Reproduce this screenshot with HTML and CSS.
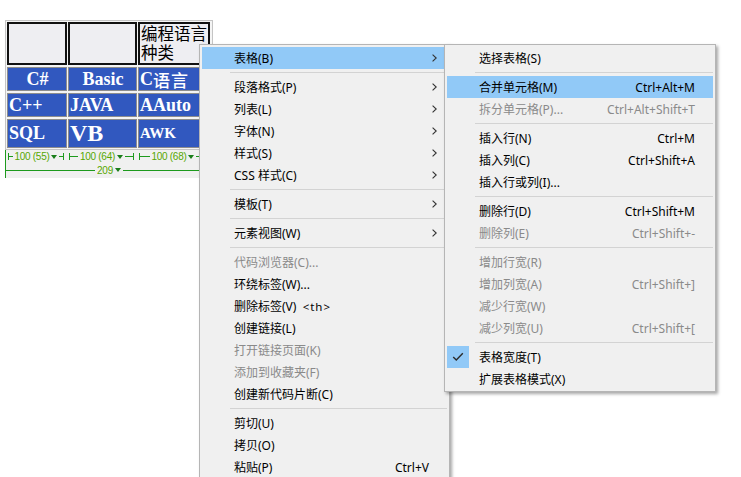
FILE: index.html
```html
<!DOCTYPE html>
<html>
<head>
<meta charset="utf-8">
<link rel="stylesheet" href="styles.css">
</head>
<body>
<div class="page">
  <div class="doc">
    <div class="tbl">
      <div class="th"></div>
      <div class="th"></div>
      <div class="th th-text">编程语言种类</div>
      <div class="td center">C#</div>
      <div class="td center">Basic</div>
      <div class="td">C<span class="cjk">语言</span></div>
      <div class="td">C++</div>
      <div class="td">JAVA</div>
      <div class="td">AAuto</div>
      <div class="td">SQL</div>
      <div class="td big">VB</div>
      <div class="td small">AWK</div>
    </div>
    <div class="ruler">
      <div class="cols">
        <div class="seg"><i class="tick"></i><i class="ln"></i><span class="rt">100 (55)</span><i class="tri"></i><i class="ln"></i><i class="tick"></i></div>
        <div class="seg"><i class="tick"></i><i class="ln"></i><span class="rt">100 (64)</span><i class="tri"></i><i class="ln"></i><i class="tick"></i></div>
        <div class="seg"><i class="tick"></i><i class="ln"></i><span class="rt">100 (68)</span><i class="tri"></i><i class="ln"></i><i class="tick"></i></div>
      </div>
      <div class="total"><i class="ln"></i><span class="rt">209</span><i class="tri"></i><i class="ln"></i></div>
    </div>
  </div>

  <div class="menu main">
    <div class="item hl"><span class="label">表格(B)</span><svg class="arrow" width="5" height="8" viewBox="0 0 5 8"><path d="M0.6 0.6 L4.2 4 L0.6 7.4" fill="none" stroke="#333" stroke-width="1.1"/></svg></div>
    <div class="sep"></div>
    <div class="item"><span class="label">段落格式(P)</span><svg class="arrow" width="5" height="8" viewBox="0 0 5 8"><path d="M0.6 0.6 L4.2 4 L0.6 7.4" fill="none" stroke="#333" stroke-width="1.1"/></svg></div>
    <div class="item"><span class="label">列表(L)</span><svg class="arrow" width="5" height="8" viewBox="0 0 5 8"><path d="M0.6 0.6 L4.2 4 L0.6 7.4" fill="none" stroke="#333" stroke-width="1.1"/></svg></div>
    <div class="item"><span class="label">字体(N)</span><svg class="arrow" width="5" height="8" viewBox="0 0 5 8"><path d="M0.6 0.6 L4.2 4 L0.6 7.4" fill="none" stroke="#333" stroke-width="1.1"/></svg></div>
    <div class="item"><span class="label">样式(S)</span><svg class="arrow" width="5" height="8" viewBox="0 0 5 8"><path d="M0.6 0.6 L4.2 4 L0.6 7.4" fill="none" stroke="#333" stroke-width="1.1"/></svg></div>
    <div class="item"><span class="label">CSS 样式(C)</span><svg class="arrow" width="5" height="8" viewBox="0 0 5 8"><path d="M0.6 0.6 L4.2 4 L0.6 7.4" fill="none" stroke="#333" stroke-width="1.1"/></svg></div>
    <div class="sep"></div>
    <div class="item"><span class="label">模板(T)</span><svg class="arrow" width="5" height="8" viewBox="0 0 5 8"><path d="M0.6 0.6 L4.2 4 L0.6 7.4" fill="none" stroke="#333" stroke-width="1.1"/></svg></div>
    <div class="sep"></div>
    <div class="item"><span class="label">元素视图(W)</span><svg class="arrow" width="5" height="8" viewBox="0 0 5 8"><path d="M0.6 0.6 L4.2 4 L0.6 7.4" fill="none" stroke="#333" stroke-width="1.1"/></svg></div>
    <div class="sep"></div>
    <div class="item off"><span class="label">代码浏览器(C)...</span></div>
    <div class="item"><span class="label">环绕标签(W)...</span></div>
    <div class="item"><span class="label">删除标签(V)&nbsp;&nbsp;<span class="tag">&lt;th&gt;</span></span></div>
    <div class="item"><span class="label">创建链接(L)</span></div>
    <div class="item off"><span class="label">打开链接页面(K)</span></div>
    <div class="item off"><span class="label">添加到收藏夹(F)</span></div>
    <div class="item"><span class="label">创建新代码片断(C)</span></div>
    <div class="sep"></div>
    <div class="item"><span class="label">剪切(U)</span></div>
    <div class="item"><span class="label">拷贝(O)</span></div>
    <div class="item"><span class="label">粘贴(P)</span><span class="key">Ctrl+V</span></div>
  </div>

  <div class="menu sub">
    <div class="item"><span class="label">选择表格(S)</span></div>
    <div class="sep"></div>
    <div class="item hl"><span class="label">合并单元格(M)</span><span class="key">Ctrl+Alt+M</span></div>
    <div class="item off"><span class="label">拆分单元格(P)...</span><span class="key">Ctrl+Alt+Shift+T</span></div>
    <div class="sep"></div>
    <div class="item"><span class="label">插入行(N)</span><span class="key">Ctrl+M</span></div>
    <div class="item"><span class="label">插入列(C)</span><span class="key">Ctrl+Shift+A</span></div>
    <div class="item"><span class="label">插入行或列(I)...</span></div>
    <div class="sep"></div>
    <div class="item"><span class="label">删除行(D)</span><span class="key">Ctrl+Shift+M</span></div>
    <div class="item off"><span class="label">删除列(E)</span><span class="key">Ctrl+Shift+-</span></div>
    <div class="sep"></div>
    <div class="item off"><span class="label">增加行宽(R)</span></div>
    <div class="item off"><span class="label">增加列宽(A)</span><span class="key">Ctrl+Shift+]</span></div>
    <div class="item off"><span class="label">减少行宽(W)</span></div>
    <div class="item off"><span class="label">减少列宽(U)</span><span class="key">Ctrl+Shift+[</span></div>
    <div class="sep"></div>
    <div class="item"><span class="check"><svg width="12" height="10" viewBox="0 0 12 10"><path d="M1.2 5 L4.3 8 L10.8 1.2" fill="none" stroke="#2b2b2b" stroke-width="1.4"/></svg></span><span class="label">表格宽度(T)</span></div>
    <div class="item"><span class="label">扩展表格模式(X)</span></div>
  </div>
</div>
</body>
</html>
```
FILE: styles.css
```css
* { box-sizing: border-box; }
html, body { margin: 0; padding: 0; background: #fff; }
body { overflow: hidden; width: 741px; height: 477px; }
.page { position: relative; width: 741px; height: 477px; padding: 20px 0 0 5px; overflow: hidden; }

.doc { width: 208px; }
.tbl {
  display: grid;
  grid-template-columns: 60px 69px 72px;
  grid-template-rows: 43px 24px 24px 29px;
  gap: 2px 1px;
  padding: 1px;
  border: 1px solid #c4c4c4;
  background: #f4f4f4;
}
.th {
  background: #eeeef2;
  border: 2px solid #111;
}
.th-text {
  font-family: "Noto Sans CJK SC", sans-serif;
  font-size: 16.5px;
  line-height: 19px;
  padding: 0 0 0 1px;
  color: #000;
  overflow: hidden;
}
.td {
  background: #3158bf;
  border: 1px solid #8d8d8d;
  color: #fff;
  font-family: "Liberation Serif", "Noto Sans CJK SC", serif;
  font-weight: bold;
  font-size: 18px;
  display: flex;
  align-items: center;
  padding-left: 1px;
  white-space: nowrap;
  overflow: hidden;
}
.td .cjk { font-family: "Noto Sans CJK SC", sans-serif; font-weight: 500; font-size: 17px; letter-spacing: 1px; }
.td.center { justify-content: center; }
.td.big { font-size: 24px; }
.td.small { font-size: 15px; }

.ruler {
  background: #f0f0f0;
  border-left: 1px solid #1d9a1d;
  height: 28px;
  width: 207px;
}
.cols {
  display: grid;
  grid-template-columns: 60px 69px 72px;
  column-gap: 1px;
  margin-left: 1px;
  height: 13px;
}
.seg {
  display: flex;
  align-items: center;
  margin: 0 3px 0 1px;
  height: 13px;
}
.tick { display: block; width: 1px; height: 7px; background: #1d9a1d; }
.ln { display: block; flex: 1; height: 1px; background: #1d9a1d; }
.rt {
  font-family: "Liberation Sans", sans-serif;
  font-size: 10px;
  letter-spacing: -0.3px;
  color: #56a700;
  padding: 0 2px;
  line-height: 13px;
  white-space: nowrap;
}
.tri {
  display: block;
  width: 0; height: 0;
  border-left: 3px solid transparent;
  border-right: 3px solid transparent;
  border-top: 4px solid #1a7d1a;
  margin-right: 2px;
}
.total {
  display: flex;
  align-items: center;
  height: 14px;
}

.menu {
  position: absolute;
  top: 44px;
  background: #f0f0f0;
  border: 1px solid #b5b5b5;
  box-shadow: 2px 2px 3px rgba(0,0,0,0.35);
  font-family: "Noto Sans", "Noto Sans CJK SC", sans-serif;
  font-size: 12px;
  color: #000;
  padding: 2px 0 1px;
}
.menu.main { left: 199px; width: 251px; height: 440px; }
.menu.sub { left: 444px; width: 272px; height: 348px; }

.item {
  position: relative;
  display: flex;
  align-items: center;
  height: 22px;
  margin: 0 2px;
  padding: 0 10px 0 32px;
  white-space: nowrap;
}
.item.hl { background: #91c9f7; }
.item.off { color: #8a8a8a; }
.label { flex: 1; }
.key { margin-right: 8px; }
.arrow { display: block; }
.tag { letter-spacing: 1px; font-size: 11.5px; }
.sep { height: 1px; background: #d3d3d3; margin: 3px 2px 3px 30px; }
.check {
  position: absolute;
  left: 0; top: 0;
  width: 22px; height: 22px;
  background: #91c9f7;
  display: flex;
  align-items: center;
  justify-content: center;
}
.check svg { display: block; }
```
